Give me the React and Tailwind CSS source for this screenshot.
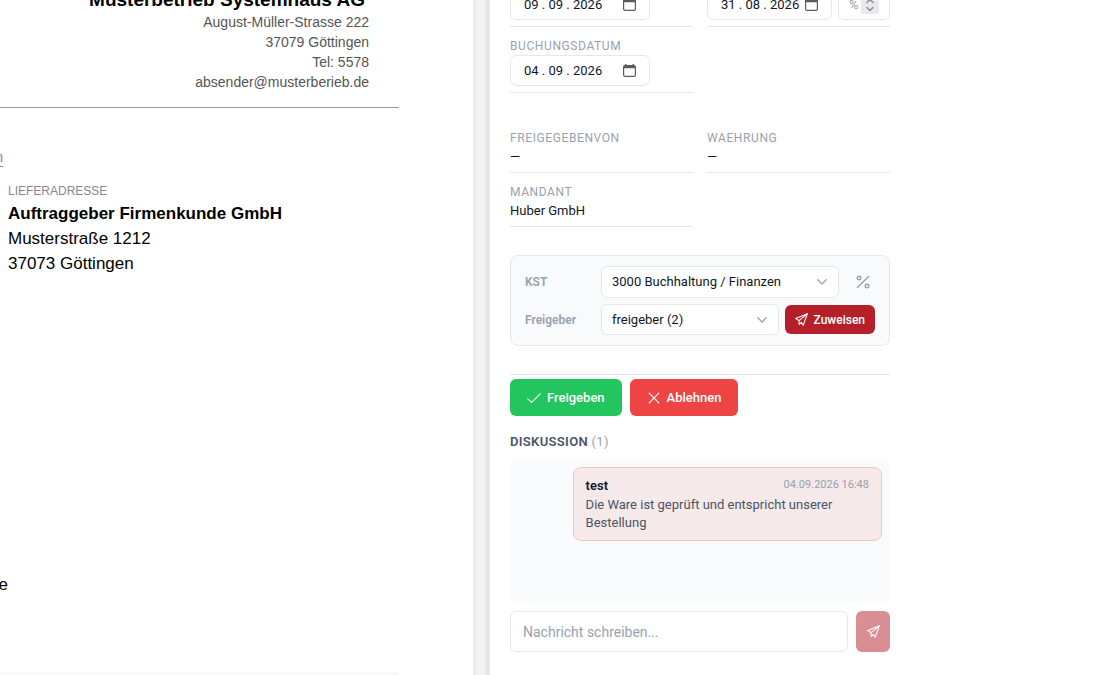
import React, { useState } from 'react';

const SendIcon = ({ size = 13 }) => (
    <svg width={size} height={size} viewBox="0 0 14 14" fill="none" stroke="currentColor" strokeWidth="1.1" strokeLinejoin="round" strokeLinecap="round" aria-hidden="true">
        <path d="M13.3.8.8 5.9l3.4 2.3.3 4.1 2.3-2.2 2 3.2L13.3.8Z" />
        <path d="M13.3.8 4.3 8.2" />
    </svg>
);

const PercentIcon = () => (
    <svg width="14" height="14" viewBox="0 0 14 14" fill="none" stroke="currentColor" strokeWidth="1.4" strokeLinecap="round" aria-hidden="true">
        <path d="M12.6 1.4 1.4 12.6" />
        <circle cx="3" cy="3" r="1.8" />
        <circle cx="11" cy="11" r="1.8" />
    </svg>
);

const CheckIcon = () => (
    <svg width="14" height="14" viewBox="0 0 14 14" fill="none" stroke="currentColor" strokeWidth="1.1" strokeLinecap="round" strokeLinejoin="round" aria-hidden="true">
        <path d="M.8 7.8 4.6 11.4 13.3 2.8" />
    </svg>
);

const CrossIcon = () => (
    <svg width="14" height="14" viewBox="0 0 14 14" fill="none" stroke="currentColor" strokeWidth="1.2" strokeLinecap="round" aria-hidden="true">
        <path d="M2.2 2.2 11.8 11.8M11.8 2.2 2.2 11.8" />
    </svg>
);

const ChevronIcon = () => (
    <svg className="pointer-events-none col-start-1 row-start-1 mr-3 justify-self-end self-center text-gray-400" width="10" height="10" viewBox="0 0 10 10" fill="none" stroke="currentColor" strokeWidth="1.3" strokeLinecap="round" strokeLinejoin="round" aria-hidden="true">
        <path d="M.8 2.8 5 7 9.2 2.8" />
    </svg>
);

const CalendarIcon = () => (
    <svg width="13" height="13" viewBox="0 0 13 13" aria-hidden="true">
        <path fill="#5b5b66" fillRule="evenodd" d="M2 0h1.4v1h6.2V0H11v1a2 2 0 0 1 2 2v8a2 2 0 0 1-2 2H2a2 2 0 0 1-2-2V3a2 2 0 0 1 2-2V0Zm-.8 4.2V11c0 .5.3.8.8.8h9c.5 0 .8-.3.8-.8V4.2H1.2Z" />
    </svg>
);

const DateInput = ({ id, label, value, wide }) => {
    const [date, setDate] = useState(value);
    return (
        <div className={`flex h-[31px] items-center justify-between rounded-md border border-gray-200 bg-white px-[13px] ${wide ? 'w-[140px]' : 'min-w-0 flex-1'}`}>
            <input
                id={id}
                type="text"
                aria-label={label}
                value={date}
                onChange={(e) => setDate(e.target.value)}
                className="w-20 min-w-0 text-[13px] leading-5 text-gray-900 outline-none"
            />
            <button type="button" aria-label="Kalender öffnen" className="shrink-0">
                <CalendarIcon />
            </button>
        </div>
    );
};

const Field = ({ label, value }) => (
    <div className="border-b border-gray-200 pb-1.5">
        <dt className="text-xs leading-[18px] tracking-wider text-gray-400 uppercase">{label}</dt>
        <dd className="text-[13px] leading-[19px] text-gray-900">{value}</dd>
    </div>
);

const Dropdown = ({ id, options, className }) => (
    <div className={`grid min-w-0 flex-1 ${className}`}>
        <select id={id} className="col-start-1 row-start-1 w-full appearance-none rounded-md border border-gray-200 bg-white pr-7 pl-2.5 text-[13px] text-gray-900">
            {options.map((o) => (
                <option key={o}>{o}</option>
            ))}
        </select>
        <ChevronIcon />
    </div>
);

const InvoicePreview = () => (
    <article className="mr-[74px] flex min-h-screen flex-col overflow-hidden font-['Liberation_Sans',Arial,sans-serif] text-black">
        <header className="-mt-[13px] border-b border-[#999] pr-[30px] pb-[15px] text-right text-sm leading-5 text-[#555]">
            <h1 className="pr-1 text-[19px] leading-[25px] font-bold text-black">Musterbetrieb Systemhaus AG</h1>
            <p>August-Müller-Strasse 222</p>
            <p>37079 Göttingen</p>
            <p>Tel: 5578</p>
            <p>absender@musterberieb.de</p>
        </header>
        <div className="mt-10 flex w-[3px] justify-end overflow-hidden border-b border-[#888] text-sm leading-[18px] text-[#888]">n</div>
        <section className="mt-3.5 pl-2 text-[17px] leading-[25px]">
            <h2 className="text-xs leading-5 text-[#888]">LIEFERADRESSE</h2>
            <p className="font-bold">Auftraggeber Firmenkunde GmbH</p>
            <p>Musterstraße 1212</p>
            <p>37073 Göttingen</p>
        </section>
        <p className="mt-auto flex w-2 justify-end text-[17px] leading-[25px]">e</p>
        <div className="mt-[75px] h-[3px] bg-[#f8f8f8]" />
    </article>
);

const Assignment = () => (
    <section className="mt-7 flex flex-col gap-1.5 rounded-lg border border-gray-200 bg-slate-50 px-3.5 py-2.5">
        <div className="flex items-center">
            <label htmlFor="kst" className="w-19 text-xs font-semibold text-gray-400">KST</label>
            <div className="flex min-w-0 flex-1 items-center gap-3">
                <Dropdown id="kst" className="h-8" options={['3000 Buchhaltung / Finanzen']} />
                <button type="button" aria-label="Aufteilen" className="flex h-6 w-6 items-center justify-center text-gray-400">
                    <PercentIcon />
                </button>
            </div>
        </div>
        <div className="flex items-center">
            <label htmlFor="freigeber" className="w-19 text-xs font-semibold text-gray-400">Freigeber</label>
            <div className="flex min-w-0 flex-1 items-center gap-1.5">
                <Dropdown id="freigeber" className="h-[31px]" options={['freigeber (2)']} />
                <button type="button" className="flex h-[29px] items-center gap-1.5 rounded-md bg-[#b51f2a] px-2.5 text-xs font-medium text-white">
                    <SendIcon />
                    Zuweisen
                </button>
            </div>
        </div>
    </section>
);

const Discussion = () => {
    const [message, setMessage] = useState('');
    return (
        <section>
            <h2 className="mt-4 text-[13px] leading-[19px] font-semibold tracking-wide text-gray-600">
                DISKUSSION <span className="font-normal text-gray-400">(1)</span>
            </h2>
            <div className="mt-2 flex h-36 flex-col items-end rounded-lg bg-slate-50 p-2">
                <div className="w-[85%] rounded-lg border border-[#e8c6c9] bg-[#f5e9ea] px-3 pt-[9px] pb-2 text-[13px] leading-[18px]">
                    <div className="flex items-start justify-between pb-px">
                        <strong className="font-semibold text-gray-900">test</strong>
                        <time className="text-[11px] leading-4 text-gray-400">04.09.2026 16:48</time>
                    </div>
                    <p className="text-gray-600">Die Ware ist geprüft und entspricht unserer Bestellung</p>
                </div>
            </div>
            <form className="mt-2 flex gap-2" onSubmit={(e) => e.preventDefault()}>
                <input
                    type="text"
                    aria-label="Nachricht"
                    value={message}
                    onChange={(e) => setMessage(e.target.value)}
                    placeholder="Nachricht schreiben..."
                    className="h-[41px] min-w-0 flex-1 rounded-md border border-gray-200 px-3 text-sm text-gray-900 outline-none placeholder:text-gray-400"
                />
                <button type="submit" aria-label="Senden" disabled={!message} className="flex w-[34px] items-center justify-center rounded-md bg-[#b51f2a] text-white disabled:opacity-50">
                    <SendIcon />
                </button>
            </form>
        </section>
    );
};

const App = () => (
    <div className="flex h-screen overflow-hidden bg-white">
        <div className="min-w-0 flex-[473]">
            <InvoicePreview />
        </div>
        <div className="w-3 shrink-0 bg-gradient-to-r from-[#e8e9ea] to-[#f2f3f5] to-40%" />
        <div className="w-[5px] shrink-0 bg-gray-200" />

        <main className="min-w-0 flex-[620] overflow-hidden font-[Roboto,sans-serif]">
            <div className="-mt-[11px] max-w-[420px] px-5">
                <div className="grid grid-cols-2 gap-x-3.5 gap-y-2.5">
                    <div className="border-b border-gray-200 pb-1.5">
                        <DateInput id="faellig" label="Fälligkeitsdatum" value="09 . 09 . 2026" wide />
                    </div>
                    <div className="flex gap-1.5 border-b border-gray-200 pb-1.5">
                        <DateInput id="skonto" label="Skontodatum" value="31 . 08 . 2026" />
                        <div className="flex h-[31px] w-[52px] items-center justify-between rounded-md border border-gray-200 px-2.5">
                            <input type="text" inputMode="decimal" aria-label="Skonto in Prozent" placeholder="%" className="w-3 min-w-0 text-[13px] outline-none placeholder:text-gray-400" />
                            <button type="button" aria-label="Wert ändern" className="flex h-[19px] w-[18px] shrink-0 items-center justify-center bg-[#e9e9ed] text-[#8f8f9d]">
                                <svg width="10" height="14" viewBox="0 0 10 14" fill="none" stroke="currentColor" strokeWidth="1.6" strokeLinecap="round" strokeLinejoin="round" aria-hidden="true">
                                    <path d="M2 4.5 5 1.5 8 4.5M2 9.5 5 12.5 8 9.5" />
                                </svg>
                            </button>
                        </div>
                    </div>
                    <div className="border-b border-gray-200 pb-1.5">
                        <label htmlFor="buchung" className="block text-xs leading-[18px] tracking-wider text-gray-400">BUCHUNGSDATUM</label>
                        <DateInput id="buchung" value="04 . 09 . 2026" wide />
                    </div>
                </div>

                <dl className="mt-9 grid grid-cols-2 gap-x-3.5 gap-y-2.5">
                    <Field label="Freigegebenvon" value="—" />
                    <Field label="Waehrung" value="—" />
                    <Field label="Mandant" value="Huber GmbH" />
                </dl>

                <Assignment />

                <div className="mt-7 flex gap-2 border-t border-gray-200 pt-1">
                    <button type="button" className="flex h-[37px] items-center gap-1.5 rounded-md bg-[#22c55e] px-[17px] text-[13px] font-medium text-white">
                        <CheckIcon />
                        Freigeben
                    </button>
                    <button type="button" className="flex h-[37px] items-center gap-1.5 rounded-md bg-[#ef4444] px-[17px] text-[13px] font-medium text-white">
                        <CrossIcon />
                        Ablehnen
                    </button>
                </div>

                <Discussion />
            </div>
        </main>
    </div>
);

export default App;
